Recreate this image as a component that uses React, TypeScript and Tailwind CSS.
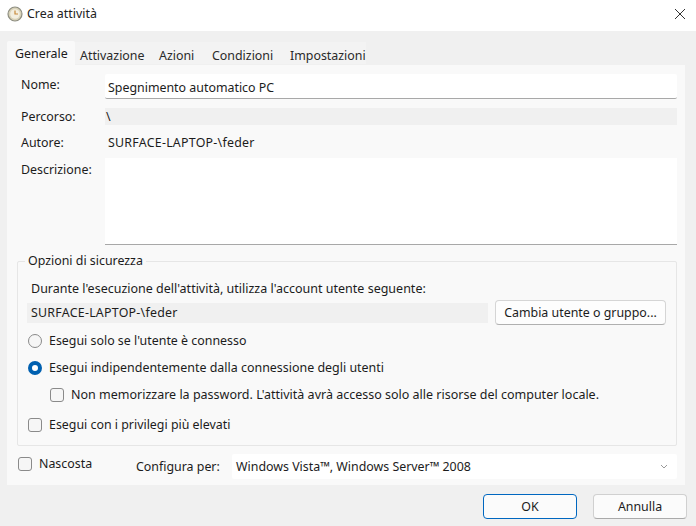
import React from "react";

const font = { fontFamily: '"Noto Sans", sans-serif' };

function Radio({ checked }: { checked?: boolean }) {
  return checked ? (
    <span className="block w-[14px] h-[14px] rounded-full border-[4px] border-[#0060b0] bg-white shrink-0" />
  ) : (
    <span className="block w-[14px] h-[14px] rounded-full border border-[#8a8a8a] bg-[#f6f6f6] shrink-0" />
  );
}
function Check() {
  return <span className="block w-[14px] h-[14px] rounded-[3px] border border-[#8a8a8a] bg-[#f6f6f6] shrink-0" />;
}

export default function App() {
  return (
    <div style={font} className="w-[696px] h-[526px] bg-[#f0f0f0] text-[12.4px] leading-[17px] text-[#1c1c1c] overflow-hidden flex flex-col">
      {/* Title bar */}
      <div className="h-[31px] bg-white flex items-center pl-[7px] pr-[10px] pb-[3px] shrink-0">
        <svg width="16" height="16" viewBox="0 0 16 16" className="shrink-0">
          <circle cx="8" cy="8" r="7" fill="#d8d2b8" stroke="#8d8d80" strokeWidth="1.2" />
          <circle cx="8" cy="8" r="4.8" fill="#f3efe0" />
          <path d="M8 4.5V8H11" stroke="#c98a3a" strokeWidth="1.2" fill="none" />
        </svg>
        <span className="ml-[4px] mt-[-2px] text-[#222]">Crea attività</span>
        <svg width="12" height="12" viewBox="0 0 12 12" className="ml-auto">
          <path d="M1 1L11 11M11 1L1 11" stroke="#333" strokeWidth="1" />
        </svg>
      </div>

      {/* Tabs */}
      <div className="flex items-end h-[34px] pl-[7px] shrink-0">
        <div className="h-[24px] w-[68px] bg-[#f9f9f9] pl-[8px] pt-[4px] rounded-t-[2px]">Generale</div>
        <div className="pl-[5px] w-[78px] h-[22px] pt-[5px] text-[#2a2a2a] bg-[#f3f3f3] mb-[1px]">Attivazione</div>
        <div className="pl-[6px] w-[53px] h-[22px] pt-[5px] text-[#2a2a2a] bg-[#f3f3f3] mb-[1px]">Azioni</div>
        <div className="pl-[6px] w-[80px] h-[22px] pt-[5px] text-[#2a2a2a] bg-[#f3f3f3] mb-[1px]">Condizioni</div>
        <div className="pl-[4px] w-[80px] h-[22px] pt-[5px] text-[#2a2a2a] bg-[#f3f3f3] mb-[1px]">Impostazioni</div>
      </div>

      {/* Panel */}
      <div className="ml-[7px] mr-[11px] h-[420px] bg-[#f9f9f9] shrink-0 flex flex-col pl-[10px] pr-[8px] pt-[9px]">
        <div className="flex h-[25px]">
          <span className="w-[88px] pl-[4px] pt-[2px]">Nome:</span>
          <div className="flex-1 bg-white border-b border-[#a8a8a8] pl-[3px] pt-[5px] rounded-[2px]">Spegnimento automatico PC</div>
        </div>
        <div className="flex h-[17px] mt-[9px]">
          <span className="w-[88px] pl-[4px]">Percorso:</span>
          <div className="flex-1 bg-[#f0f0f0] pl-[1px]">\</div>
        </div>
        <div className="flex h-[17px] mt-[9px]">
          <span className="w-[88px] pl-[4px]">Autore:</span>
          <div className="flex-1 pl-[3px] tracking-[0.25px]">SURFACE-LAPTOP-\feder</div>
        </div>
        <div className="flex h-[87px] mt-[7px]">
          <span className="w-[88px] pl-[4px] pt-[3px]">Descrizione:</span>
          <div className="flex-1 bg-white border-b border-[#a8a8a8]" />
        </div>

        {/* Group box */}
        <div className="mt-[16px] h-[185px] border border-[#e6e6e6] rounded-[2px] flex flex-col shrink-0">
          <div className="h-0 pl-[7px]">
            <span className="block w-fit bg-[#f9f9f9] px-[3px] mt-[-10px]">Opzioni di sicurezza</span>
          </div>
          <div className="pl-[13px] mt-[18px] text-[12.5px]">Durante l'esecuzione dell'attività, utilizza l'account utente seguente:</div>
          <div className="flex items-center pl-[9px] mt-[3px] h-[25px]">
            <div className="w-[461px] h-[20px] bg-[#f0f0f0] pl-[4px] pt-[1px] tracking-[0.25px]">SURFACE-LAPTOP-\feder</div>
            <div className="ml-[7px] w-[171px] h-[25px] bg-[#fdfdfd] border border-[#d5d5d5] border-b-[#b0b0b0] rounded-[4px] flex items-center justify-center">Cambia utente o gruppo...</div>
          </div>
          <div className="flex items-center h-[17px] pl-[10px] mt-[7px] gap-[7px]">
            <Radio /><span>Esegui solo se l'utente è connesso</span>
          </div>
          <div className="flex items-center h-[17px] pl-[10px] mt-[10px] gap-[7px]">
            <Radio checked /><span className="text-[12.45px]">Esegui indipendentemente dalla connessione degli utenti</span>
          </div>
          <div className="flex items-center h-[17px] pl-[32px] mt-[10px] gap-[7px]">
            <Check /><span className="text-[12.5px]">Non memorizzare la password. L'attività avrà accesso solo alle risorse del computer locale.</span>
          </div>
          <div className="flex items-center h-[17px] pl-[10px] mt-[13px] gap-[7px]">
            <Check /><span>Esegui con i privilegi più elevati</span>
          </div>
        </div>

        <div className="flex items-center mt-[8px] h-[25px]">
          <div className="ml-[1px] flex items-center gap-[7px] w-[118px] mt-[-6px]">
            <Check /><span>Nascosta</span>
          </div>
          <span className="w-[96px] mt-[-1px]">Configura per:</span>
          <div className="flex-1 h-[25px] bg-white flex items-center pl-[4px] pr-[9px] rounded-[2px]">
            <span className="mt-[-1px]">Windows Vista™, Windows Server™ 2008</span>
            <svg width="8" height="5" viewBox="0 0 8 5" className="ml-auto">
              <path d="M1 1L4 4L7 1" stroke="#999" fill="none" />
            </svg>
          </div>
        </div>
      </div>

      {/* Buttons */}
      <div className="flex pl-[483px] mt-[9px] gap-[16px]">
        <div className="w-[94px] h-[25px] bg-[#fbfbfb] border border-[#0067c0] rounded-[4px] flex items-center justify-center">OK</div>
        <div className="w-[94px] h-[25px] bg-[#fbfbfb] border border-[#d0d0d0] border-b-[#aaa] rounded-[4px] flex items-center justify-center">Annulla</div>
      </div>
    </div>
  );
}
